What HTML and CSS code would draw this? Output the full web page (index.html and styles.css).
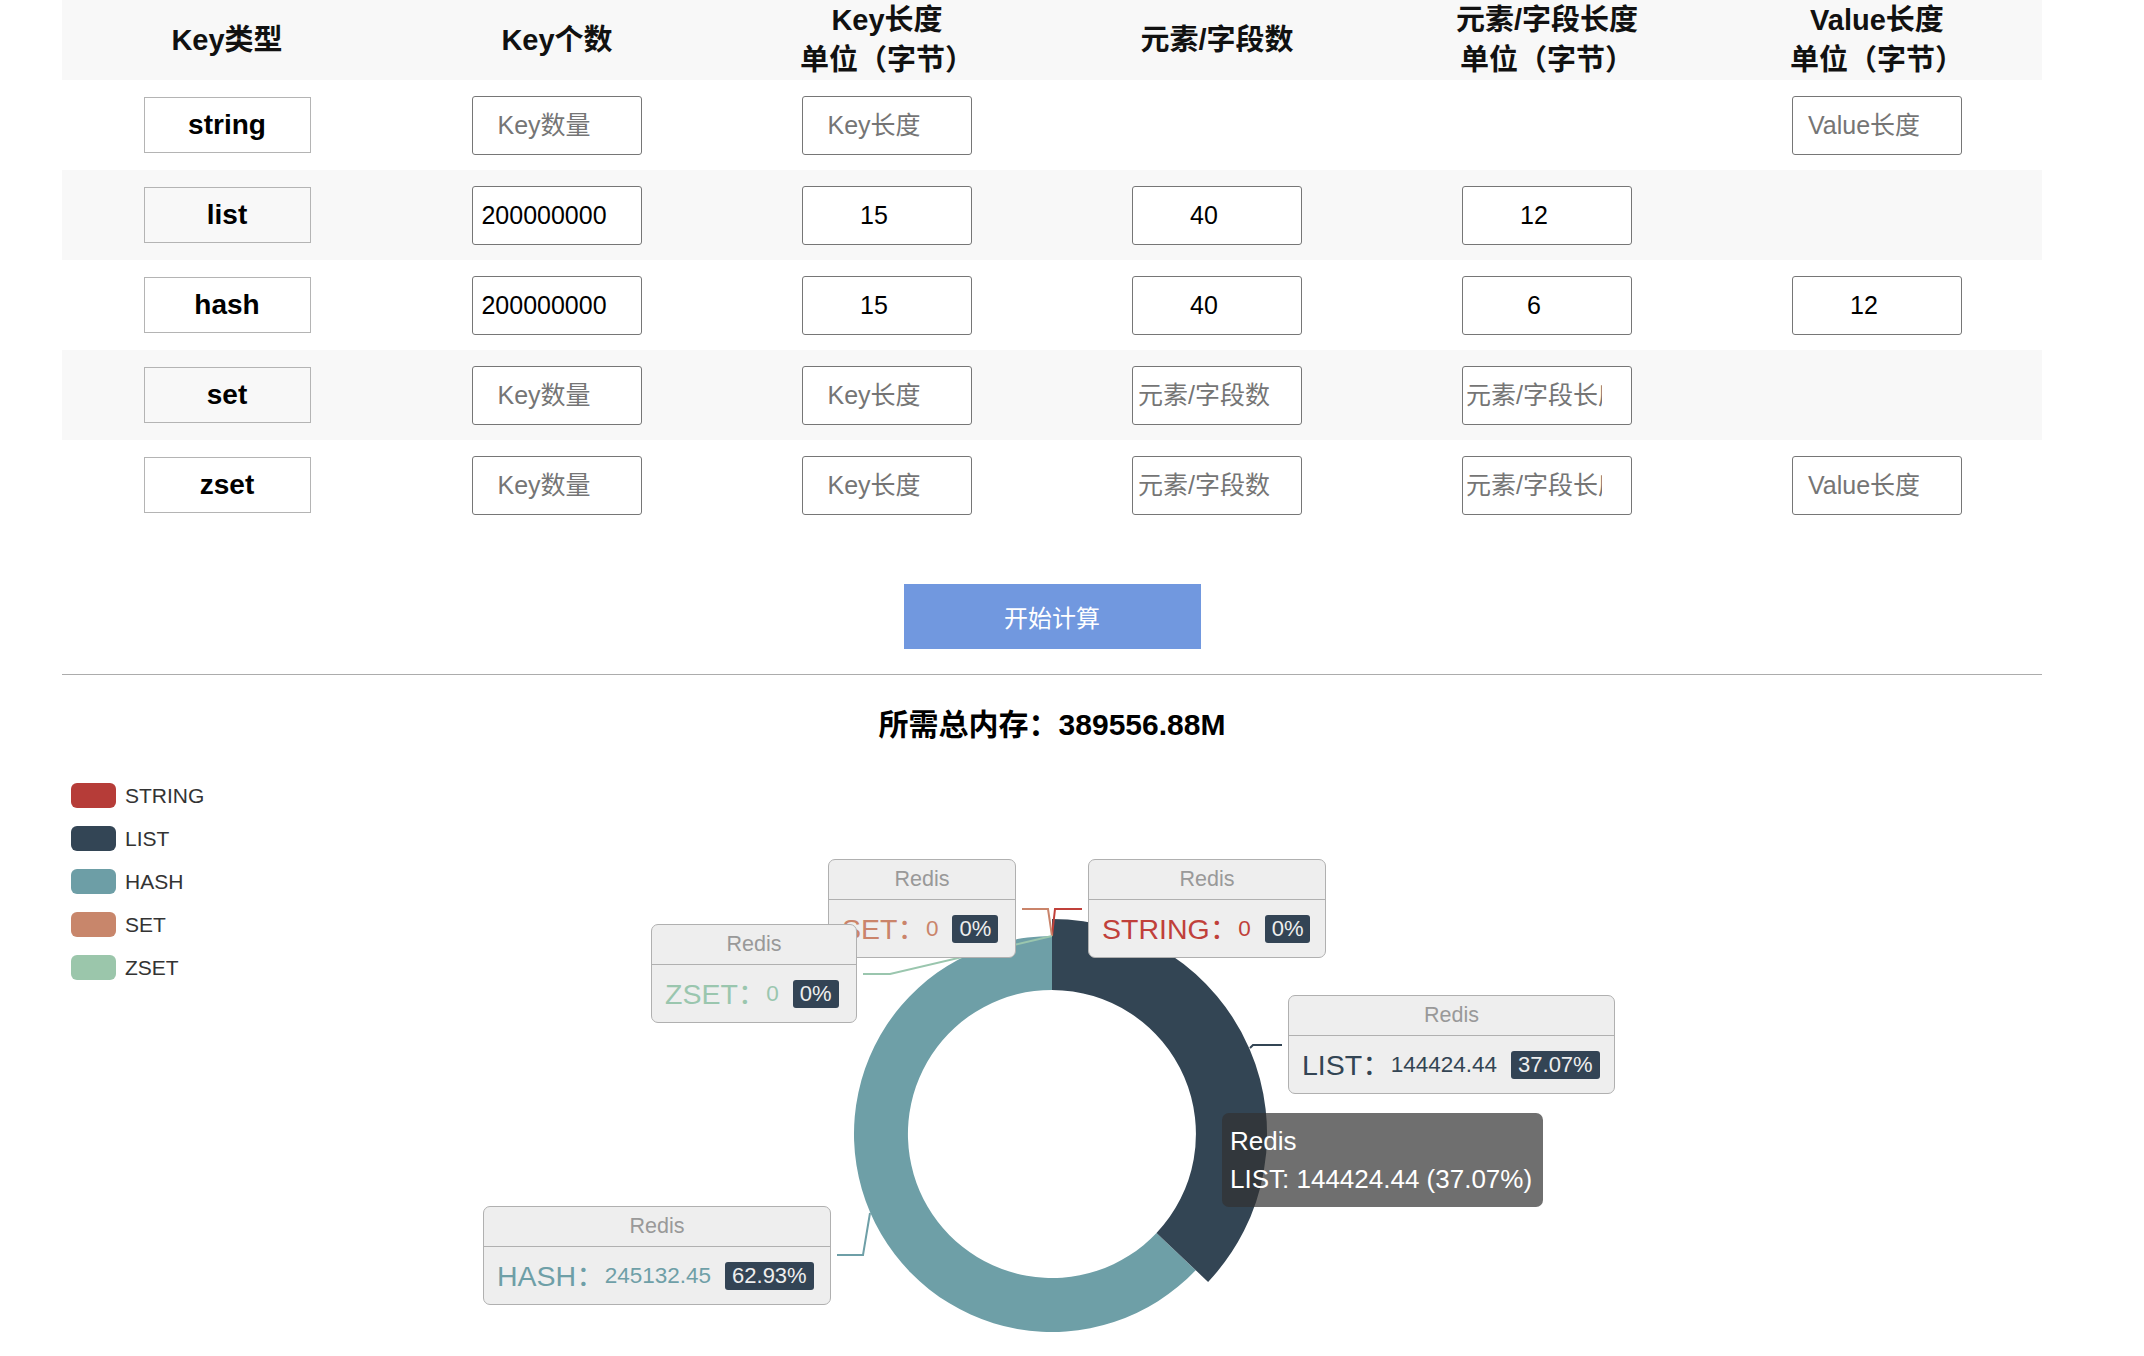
FILE: index.html
```html
<!DOCTYPE html>
<html lang="zh-CN">
<head>
<meta charset="utf-8">
<title>Redis 内存计算</title>
<link rel="stylesheet" href="styles.css">
</head>
<body>
<div class="page">
  <div class="calc-table">
    <div class="row head">
      <div class="cell"><span>Key类型</span></div>
      <div class="cell"><span>Key个数</span></div>
      <div class="cell"><span>Key长度<br>单位（字节）</span></div>
      <div class="cell"><span>元素/字段数</span></div>
      <div class="cell"><span>元素/字段长度<br>单位（字节）</span></div>
      <div class="cell"><span>Value长度<br>单位（字节）</span></div>
    </div>
    <div class="row">
      <div class="cell"><div class="type">string</div></div>
      <div class="cell"><input class="num" type="text" placeholder="Key数量"></div>
      <div class="cell"><input class="num" type="text" placeholder="Key长度"></div>
      <div class="cell"></div>
      <div class="cell"></div>
      <div class="cell"><input class="num" type="text" placeholder="Value长度"></div>
    </div>
    <div class="row">
      <div class="cell"><div class="type">list</div></div>
      <div class="cell"><input class="num" type="text" placeholder="Key数量" value="200000000"></div>
      <div class="cell"><input class="num" type="text" placeholder="Key长度" value="15"></div>
      <div class="cell"><input class="num" type="text" placeholder="元素/字段数" value="40"></div>
      <div class="cell"><input class="num" type="text" placeholder="元素/字段长度" value="12"></div>
      <div class="cell"></div>
    </div>
    <div class="row">
      <div class="cell"><div class="type">hash</div></div>
      <div class="cell"><input class="num" type="text" placeholder="Key数量" value="200000000"></div>
      <div class="cell"><input class="num" type="text" placeholder="Key长度" value="15"></div>
      <div class="cell"><input class="num" type="text" placeholder="元素/字段数" value="40"></div>
      <div class="cell"><input class="num" type="text" placeholder="元素/字段长度" value="6"></div>
      <div class="cell"><input class="num" type="text" placeholder="Value长度" value="12"></div>
    </div>
    <div class="row">
      <div class="cell"><div class="type">set</div></div>
      <div class="cell"><input class="num" type="text" placeholder="Key数量"></div>
      <div class="cell"><input class="num" type="text" placeholder="Key长度"></div>
      <div class="cell"><input class="num" type="text" placeholder="元素/字段数"></div>
      <div class="cell"><input class="num" type="text" placeholder="元素/字段长度"></div>
      <div class="cell"></div>
    </div>
    <div class="row">
      <div class="cell"><div class="type">zset</div></div>
      <div class="cell"><input class="num" type="text" placeholder="Key数量"></div>
      <div class="cell"><input class="num" type="text" placeholder="Key长度"></div>
      <div class="cell"><input class="num" type="text" placeholder="元素/字段数"></div>
      <div class="cell"><input class="num" type="text" placeholder="元素/字段长度"></div>
      <div class="cell"><input class="num" type="text" placeholder="Value长度"></div>
    </div>
  </div>

  <div class="actions">
    <button class="btn" type="button">开始计算</button>
  </div>

  <div class="total">所需总内存：389556.88M</div>

  <div class="chart">
    <ul class="legend">
      <li class="legend-item"><span class="swatch sw-string"></span>STRING</li>
      <li class="legend-item"><span class="swatch sw-list"></span>LIST</li>
      <li class="legend-item"><span class="swatch sw-hash"></span>HASH</li>
      <li class="legend-item"><span class="swatch sw-set"></span>SET</li>
      <li class="legend-item"><span class="swatch sw-zset"></span>ZSET</li>
    </ul>

    <svg class="pie" width="1980" height="611" viewBox="0 0 1980 611">
      <path class="sec-hash" d="M1133.7 525.2 A198 198 0 1 1 990 191 L990 245 A144 144 0 1 0 1094.5 488 Z"/>
      <path class="sec-list" d="M990 174 A215 215 0 0 1 1146.1 536.9 L1094.5 488 A144 144 0 0 0 990 245 Z"/>
      <polyline class="ln ln-string" points="990,191 993,164 1020,164"/>
      <polyline class="ln ln-set" points="990,191 986,164 960,164"/>
      <polyline class="ln ln-zset" points="990,191 828,229 801,229"/>
      <polyline class="ln ln-list" points="1188,303 1191,300 1220,300"/>
      <polyline class="ln ln-hash" points="808,468 801,510 775,510"/>
    </svg>

    <div class="label lbl-string">
      <div class="lbl-head">Redis</div>
      <div class="lbl-body"><span class="lbl-name">STRING：</span><span class="lbl-val">0</span><span class="lbl-per">0%</span></div>
    </div>
    <div class="label lbl-list">
      <div class="lbl-head">Redis</div>
      <div class="lbl-body"><span class="lbl-name">LIST：</span><span class="lbl-val">144424.44</span><span class="lbl-per">37.07%</span></div>
    </div>
    <div class="label lbl-hash">
      <div class="lbl-head">Redis</div>
      <div class="lbl-body"><span class="lbl-name">HASH：</span><span class="lbl-val">245132.45</span><span class="lbl-per">62.93%</span></div>
    </div>
    <div class="label lbl-set">
      <div class="lbl-head">Redis</div>
      <div class="lbl-body"><span class="lbl-name">SET：</span><span class="lbl-val">0</span><span class="lbl-per">0%</span></div>
    </div>
    <div class="label lbl-zset">
      <div class="lbl-head">Redis</div>
      <div class="lbl-body"><span class="lbl-name">ZSET：</span><span class="lbl-val">0</span><span class="lbl-per">0%</span></div>
    </div>

    <div class="tooltip">Redis<br>LIST: 144424.44 (37.07%)</div>
  </div>
</div>
</body>
</html>
```

FILE: styles.css
```css
* { box-sizing: border-box; }

html, body {
  margin: 0;
  padding: 0;
  background: #fff;
}

body {
  font-family: "Liberation Sans", "Noto Sans CJK SC", sans-serif;
  color: #000;
  overflow: hidden;
}

.page {
  width: 1980px;
  margin-left: 62px;
}

/* ---------- table ---------- */
.row {
  display: grid;
  grid-template-columns: repeat(6, 330px);
  height: 90px;
}

.row:nth-child(odd) { background: #f8f8f8; }

.row.head { height: 80px; }

.cell {
  display: flex;
  align-items: center;
  justify-content: center;
}

.head .cell {
  font-weight: bold;
  font-size: 29px;
  line-height: 40px;
  text-align: center;
  padding-bottom: 14px;
  color: #111;
}

.type {
  width: 167px;
  height: 56px;
  border: 1px solid #b4b4b4;
  display: flex;
  align-items: center;
  justify-content: center;
  font-weight: bold;
  font-size: 28px;
  color: #000;
}

.num {
  width: 170px;
  height: 59px;
  border: 1px solid #767676;
  border-radius: 3px;
  padding: 0 29px 0 3px;
  font-family: "Liberation Sans", "Noto Sans CJK SC", sans-serif;
  font-size: 25px;
  text-align: center;
  color: #000;
  background: #fff;
  outline: none;
  margin: 0;
}

.num::placeholder { color: #757575; }

/* ---------- action ---------- */
.actions {
  display: flex;
  justify-content: center;
  padding-top: 54px;
  padding-bottom: 25px;
  border-bottom: 1px solid #acacac;
}

.btn {
  width: 297px;
  height: 65px;
  background: #7198df;
  color: #fff;
  border: none;
  font-family: "Liberation Sans", "Noto Sans CJK SC", sans-serif;
  font-size: 24px;
  padding: 0;
}

.total {
  margin-top: 30px;
  text-align: center;
  font-weight: bold;
  font-size: 30px;
  line-height: 40px;
  color: #000;
}

/* ---------- chart ---------- */
.chart {
  position: relative;
  height: 611px;
}

.legend {
  list-style: none;
  margin: 0;
  padding: 38px 0 0 9px;
  display: flex;
  flex-direction: column;
  gap: 18px;
  font-size: 21px;
  color: #333;
}

.legend-item {
  display: flex;
  align-items: center;
  height: 25px;
  gap: 9px;
}

.swatch {
  width: 45px;
  height: 25px;
  border-radius: 6px;
  display: inline-block;
}

.sw-string { background: #b63c38; }
.sw-list   { background: #334555; }
.sw-hash   { background: #6d9ea6; }
.sw-set    { background: #c8866b; }
.sw-zset   { background: #9bc6ab; }

.pie {
  position: absolute;
  left: 0;
  top: 0;
  overflow: visible;
}

.sec-hash { fill: #6e9fa7; }
.sec-list { fill: #334554; }

.ln { fill: none; stroke-width: 2; }
.ln-string { stroke: #c0403a; }
.ln-set    { stroke: #ca846a; }
.ln-zset   { stroke: #9ac6ae; }
.ln-list   { stroke: #334554; }
.ln-hash   { stroke: #6e9fa7; }

.label {
  position: absolute;
  height: 99px;
  background: #eee;
  border: 1px solid #b0b0b0;
  border-radius: 7px;
  white-space: nowrap;
}

.lbl-head {
  height: 40px;
  line-height: 39px;
  text-align: center;
  color: #999;
  font-size: 21.5px;
  border-bottom: 1px solid #b0b0b0;
}

.lbl-body {
  height: 57px;
  display: flex;
  align-items: center;
  padding-left: 13px;
}

.lbl-name { font-size: 28.5px; line-height: 30px; }
.lbl-val  { font-size: 22.5px; line-height: 30px; }

.lbl-per {
  margin-left: 14px;
  background: #334455;
  color: #eee;
  font-size: 22px;
  line-height: 24px;
  padding: 2px 7px;
  border-radius: 3px;
}

.lbl-string { left: 1026px; top: 114px; width: 238px; color: #c0403a; }
.lbl-set    { left: 766px;  top: 114px; width: 188px; color: #ca846a; }
.lbl-zset   { left: 589px;  top: 179px; width: 206px; color: #9ac6ae; }
.lbl-list   { left: 1226px; top: 250px; width: 327px; color: #334554; }
.lbl-hash   { left: 421px;  top: 461px; width: 348px; color: #6e9fa7; }

.tooltip {
  position: absolute;
  left: 1160px;
  top: 368px;
  width: 321px;
  padding: 9px 8px;
  background: rgba(50, 50, 50, 0.7);
  color: #fff;
  border-radius: 7px;
  font-size: 26px;
  line-height: 38px;
  white-space: nowrap;
}
```
